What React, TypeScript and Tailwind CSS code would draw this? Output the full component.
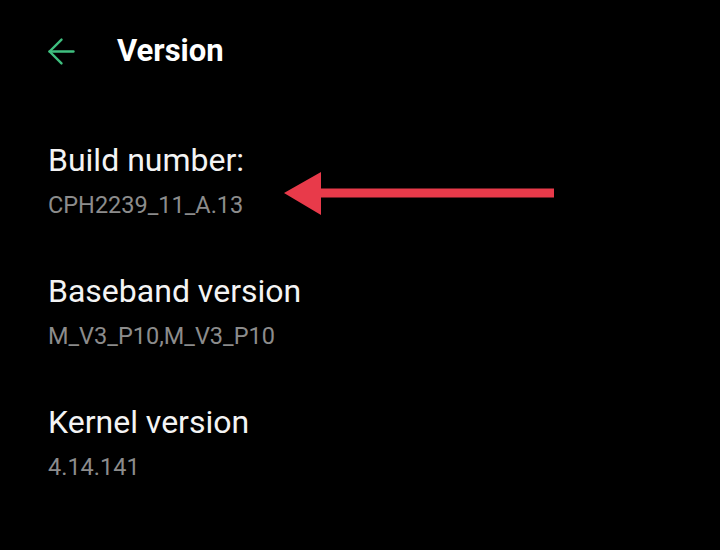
import { ArrowLeft } from "lucide-react";

const items = [
  { title: "Build number:", value: "CPH2239_11_A.13" },
  { title: "Baseband version", value: "M_V3_P10,M_V3_P10" },
  { title: "Kernel version", value: "4.14.141" },
];

export default function App() {
  return (
    <div
      className="relative w-[720px] h-[550px] bg-black overflow-hidden"
      style={{ fontFamily: "Roboto, 'Noto Sans', sans-serif" }}
    >
      {/* Header */}
      <div className="flex items-center pt-[31px] pl-[41px] h-[71px]">
        <ArrowLeft className="w-[41px] h-[41px] text-[#3fbf7f]" strokeWidth={1.4} />
        <h1 className="ml-[35px] text-[31px] leading-[40px] font-bold text-white">Version</h1>
      </div>

      {/* Info list */}
      <div className="mt-[70px] pl-[48px] flex flex-col gap-[53px]">
        {items.map((it) => (
          <div key={it.title} className="flex flex-col">
            <div className="text-[32px] leading-[38px] text-[#f4f4f4]">{it.title}</div>
            <div className="mt-[12px] text-[23.5px] leading-[28px] text-[#8c8c8c]">{it.value}</div>
          </div>
        ))}
      </div>

      {/* Annotation arrow */}
      <svg className="absolute left-[280px] top-[168px]" width="280" height="50" viewBox="0 0 280 50">
        <polygon points="4,25 41,4 41,20.5 274,20.5 274,29.5 41,29.5 41,47" fill="#e83a4a" />
      </svg>
    </div>
  );
}
